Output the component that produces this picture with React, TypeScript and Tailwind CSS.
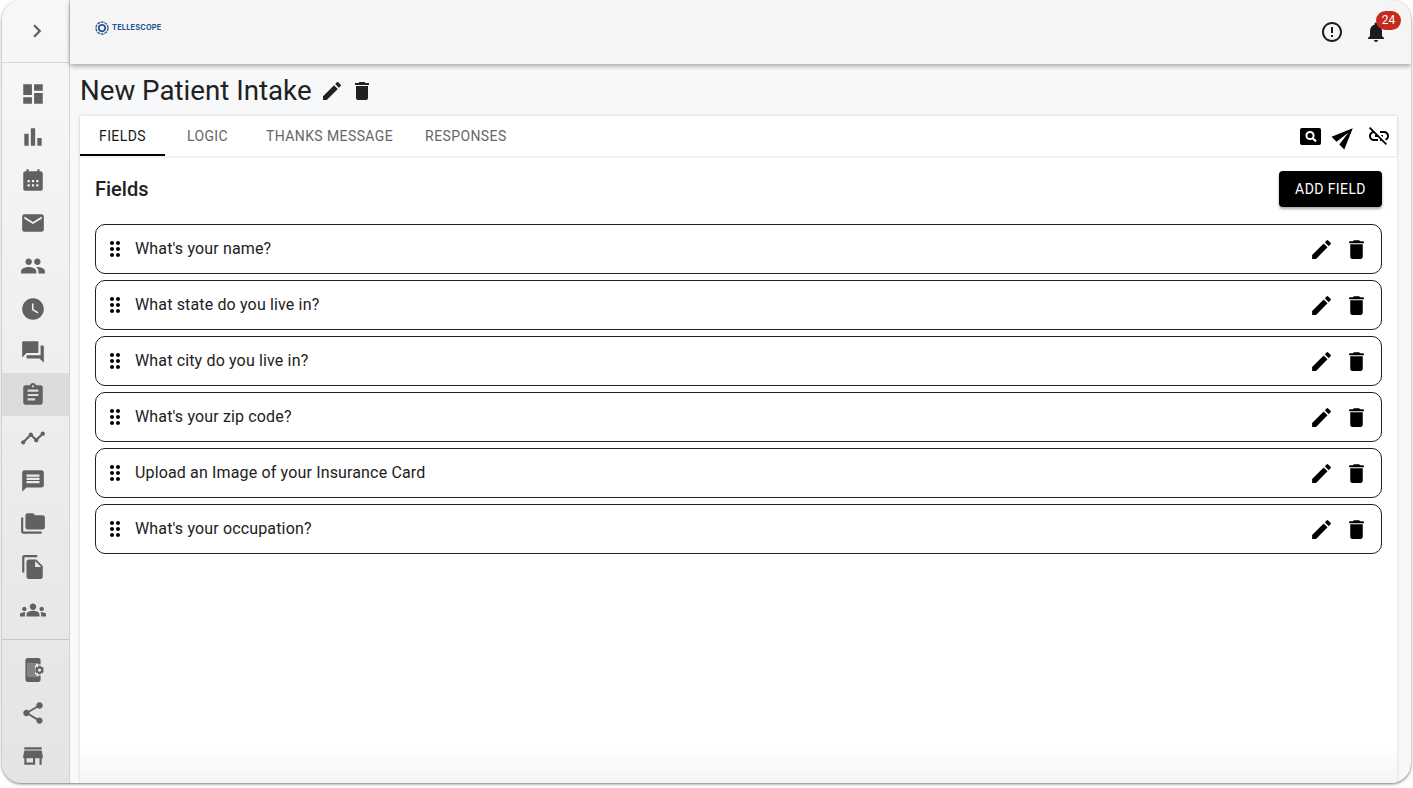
import type { ReactNode } from "react";

const P = {
  dashboard: "M3 13h8V3H3v10zm0 8h8v-6H3v6zm10 0h8V11h-8v10zm0-18v6h8V3h-8z",
  bars: "M4 9h4v11H4zm12 4h4v7h-4zm-6-9h4v16h-4z",
  calendar:
    "M19 4h-1V2h-2v2H8V2H6v2H5c-1.11 0-1.99.9-1.99 2L3 20c0 1.1.89 2 2 2h14c1.1 0 2-.9 2-2V6c0-1.1-.9-2-2-2zM9 14H7v-2h2v2zm4 0h-2v-2h2v2zm4 0h-2v-2h2v2zm-8 4H7v-2h2v2zm4 0h-2v-2h2v2zm4 0h-2v-2h2v2z",
  email: "M20 4H4c-1.1 0-1.99.9-1.99 2L2 18c0 1.1.9 2 2 2h16c1.1 0 2-.9 2-2V6c0-1.1-.9-2-2-2zm0 4l-8 5-8-5V6l8 5 8-5v2z",
  people:
    "M16 11c1.66 0 2.99-1.34 2.99-3S17.66 5 16 5c-1.66 0-3 1.34-3 3s1.34 3 3 3zm-8 0c1.66 0 2.99-1.34 2.99-3S9.66 5 8 5C6.34 5 5 6.34 5 8s1.34 3 3 3zm0 2c-2.33 0-7 1.17-7 3.5V19h14v-2.5c0-2.33-4.67-3.5-7-3.5zm8 0c-.29 0-.62.02-.97.05 1.16.84 1.97 1.97 1.97 3.45V19h6v-2.5c0-2.33-4.67-3.5-7-3.5z",
  clock: "M12 2C6.5 2 2 6.5 2 12s4.5 10 10 10 10-4.5 10-10S17.5 2 12 2zm4.2 14.2L11 13V7h1.5v5.2l4.5 2.7-.8 1.3z",
  forum:
    "M21 6h-2v9H6v2c0 .55.45 1 1 1h11l4 4V7c0-.55-.45-1-1-1zm-4 6V3c0-.55-.45-1-1-1H3c-.55 0-1 .45-1 1v14l4-4h10c.55 0 1-.45 1-1z",
  assignment:
    "M19 3h-4.18C14.4 1.84 13.3 1 12 1c-1.3 0-2.4.84-2.82 2H5c-1.1 0-2 .9-2 2v14c0 1.1.9 2 2 2h14c1.1 0 2-.9 2-2V5c0-1.1-.9-2-2-2zm-7 0c.55 0 1 .45 1 1s-.45 1-1 1-1-.45-1-1 .45-1 1-1zm2 14H7v-2h7v2zm3-4H7v-2h10v2zm0-4H7V7h10v2z",
  timeline:
    "M23 8c0 1.1-.9 2-2 2-.18 0-.35-.02-.51-.07l-3.56 3.55c.05.16.07.34.07.52 0 1.1-.9 2-2 2s-2-.9-2-2c0-.18.02-.36.07-.52l-2.55-2.55c-.16.05-.34.07-.52.07s-.36-.02-.52-.07l-4.55 4.56c.05.16.07.33.07.51 0 1.1-.9 2-2 2s-2-.9-2-2 .9-2 2-2c.18 0 .35.02.51.07l4.56-4.55C8.02 9.36 8 9.18 8 9c0-1.1.9-2 2-2s2 .9 2 2c0 .18-.02.36-.07.52l2.55 2.55c.16-.05.34-.07.52-.07s.36.02.52.07l3.55-3.56C19.02 8.35 19 8.18 19 8c0-1.1.9-2 2-2s2 .9 2 2z",
  message:
    "M20 2H4c-1.1 0-1.99.9-1.99 2L2 22l4-4h14c1.1 0 2-.9 2-2V4c0-1.1-.9-2-2-2zm-2 12H6v-2h12v2zm0-3H6V9h12v2zm0-3H6V6h12v2z",
  folders:
    "M3 6H1v13c0 1.1.9 2 2 2h17v-2H3V6zM21 4h-7l-2-2H7c-1.1 0-1.99.9-1.99 2L5 15c0 1.1.9 2 2 2h14c1.1 0 2-.9 2-2V6c0-1.1-.9-2-2-2z",
  files:
    "M16 1H4c-1.1 0-2 .9-2 2v14h2V3h12V1zm-1 4 6 6v10c0 1.1-.9 2-2 2H7.99C6.89 23 6 22.1 6 21l.01-14c0-1.1.89-2 1.99-2h7zm-1 7h5.5L14 6.5V12z",
  groups:
    "M12 12.75c1.63 0 3.07.39 4.24.9 1.08.48 1.76 1.56 1.76 2.73V18H6v-1.61c0-1.18.68-2.26 1.76-2.73 1.17-.52 2.61-.91 4.24-.91zM4 13c1.1 0 2-.9 2-2s-.9-2-2-2-2 .9-2 2 .9 2 2 2zm1.13 1.1c-.37-.06-.74-.1-1.13-.1-.99 0-1.93.21-2.78.58C.48 14.9 0 15.62 0 16.43V18h4.5v-1.61c0-.83.23-1.61.63-2.29zM20 13c1.1 0 2-.9 2-2s-.9-2-2-2-2 .9-2 2 .9 2 2 2zm4 3.43c0-.81-.48-1.53-1.22-1.85-.85-.37-1.79-.58-2.78-.58-.39 0-.76.04-1.13.1.4.68.63 1.46.63 2.29V18H24v-1.57zM12 6c1.66 0 3 1.34 3 3s-1.34 3-3 3-3-1.34-3-3 1.34-3 3-3z",
  phoneGear:
    "M21.81 12.74l-.82-.63v-.22l.8-.63c.16-.12.2-.34.1-.51l-.85-1.48c-.07-.13-.21-.2-.35-.2-.05 0-.1.01-.15.03l-.95.38c-.08-.05-.11-.07-.19-.11l-.15-1.01c-.03-.21-.2-.36-.4-.36h-1.71c-.2 0-.37.15-.4.34l-.14 1.01c-.03.02-.07.03-.1.05l-.09.06-.95-.38c-.05-.02-.1-.03-.15-.03-.14 0-.27.07-.35.2l-.85 1.48c-.1.17-.06.39.1.51l.8.63v.23l-.8.63c-.16.12-.2.34-.1.51l.85 1.48c.07.13.21.2.35.2.05 0 .1-.01.15-.03l.95-.37c.08.05.12.07.2.11l.15 1.01c.03.2.2.34.4.34h1.71c.2 0 .37-.15.4-.34l.15-1.01c.03-.02.07-.03.1-.05l.09-.06.95.38c.05.02.1.03.15.03.14 0 .27-.07.35-.2l.85-1.48c.1-.17.06-.39-.1-.51zM18 13.5c-.83 0-1.5-.67-1.5-1.5s.67-1.5 1.5-1.5 1.5.67 1.5 1.5-.67 1.5-1.5 1.5zM17 18H7V6h10v1h2V3c0-1.1-.9-2-2-2H7c-1.1 0-2 .9-2 2v18c0 1.1.9 2 2 2h10c1.1 0 2-.9 2-2v-4h-2v1z",
  phoneScreen: "M7 6h8.2l-1.6 3 .8 3-.8 3 2.4 3H7z",
  share:
    "M18 16.08c-.76 0-1.44.3-1.96.77L8.91 12.7c.05-.23.09-.46.09-.7s-.04-.47-.09-.7l7.05-4.11c.54.5 1.25.81 2.04.81 1.66 0 3-1.34 3-3s-1.34-3-3-3-3 1.34-3 3c0 .24.04.47.09.7L8.04 9.81C7.5 9.31 6.79 9 6 9c-1.66 0-3 1.34-3 3s1.34 3 3 3c.79 0 1.5-.31 2.04-.81l7.12 4.16c-.05.21-.08.43-.08.65 0 1.61 1.31 2.92 2.92 2.92 1.61 0 2.92-1.31 2.92-2.92s-1.31-2.92-2.92-2.92z",
  store: "M20 4H4v2h16V4zm1 10v-2l-1-5H4l-1 5v2h1v6h10v-6h4v6h2v-6h1zm-9 4H6v-4h6v4z",
  edit: "M3 17.25V21h3.75L17.81 9.94l-3.75-3.75L3 17.25zM20.71 7.04c.39-.39.39-1.02 0-1.41l-2.34-2.34a.9959.9959 0 0 0-1.41 0l-1.83 1.83 3.75 3.75 1.83-1.83z",
  trash: "M6 19c0 1.1.9 2 2 2h8c1.1 0 2-.9 2-2V7H6v12zM19 4h-3.5l-1-1h-5l-1 1H5v2h14V4z",
  drag: "M11 18c0 1.1-.9 2-2 2s-2-.9-2-2 .9-2 2-2 2 .9 2 2zm-2-8c-1.1 0-2 .9-2 2s.9 2 2 2 2-.9 2-2-.9-2-2-2zm0-6c-1.1 0-2 .9-2 2s.9 2 2 2 2-.9 2-2-.9-2-2-2zm6 4c1.1 0 2-.9 2-2s-.9-2-2-2-2 .9-2 2 .9 2 2 2zm0 2c-1.1 0-2 .9-2 2s.9 2 2 2 2-.9 2-2-.9-2-2-2zm0 6c-1.1 0-2 .9-2 2s.9 2 2 2 2-.9 2-2-.9-2-2-2z",
  alert:
    "M11 15h2v2h-2zm0-8h2v6h-2zm.99-5C6.47 2 2 6.48 2 12s4.47 10 9.99 10C17.52 22 22 17.52 22 12S17.52 2 11.99 2zM12 20c-4.42 0-8-3.58-8-8s3.58-8 8-8 8 3.58 8 8-3.58 8-8 8z",
  bell: "M12 22c1.1 0 2-.9 2-2h-4c0 1.1.89 2 2 2zm6-6v-5c0-3.07-1.64-5.64-4.5-6.32V4c0-.83-.67-1.5-1.5-1.5s-1.5.67-1.5 1.5v.68C7.63 5.36 6 7.92 6 11v5l-2 2v1h16v-1l-2-2z",
  send: "M2.01 21L23 12 2.01 3 2 10l15 2-15 2z",
  linkOff:
    "M17 7h-4v1.9h4c1.71 0 3.1 1.39 3.1 3.1 0 1.43-.98 2.63-2.31 2.98l1.46 1.46C20.88 15.61 22 13.95 22 12c0-2.76-2.24-5-5-5zm-1 4h-2.19l2 2H16zM2 4.27l3.11 3.11C3.29 8.12 2 9.91 2 12c0 2.76 2.24 5 5 5h4v-1.9H7c-1.71 0-3.1-1.39-3.1-3.1 0-1.59 1.21-2.9 2.76-3.07L8.73 11H8v2h2.73L13 15.27V17h1.73l4.01 4L20 19.74 3.27 3 2 4.27z",
  chevron: "M10 6L8.59 7.41 13.17 12l-4.58 4.59L10 18l6-6z",
};

function Icon({ d, className = "w-6 h-6", children }: { d: string; className?: string; children?: ReactNode }) {
  return (
    <svg viewBox="0 0 24 24" fill="currentColor" className={className}>
      {children}
      <path d={d} />
    </svg>
  );
}

function NavItem({ d, active, children }: { d: string; active?: boolean; children?: ReactNode }) {
  return (
    <div className={`flex h-[43px] items-center justify-center pr-[6px] text-[#616161] ${active ? "bg-[#dcdcdc]" : ""}`}>
      <Icon d={d} className="w-[26px] h-[26px]">
        {children}
      </Icon>
    </div>
  );
}

function Logo() {
  return (
    <div className="flex items-center gap-[3px] text-[#22568f]">
      <svg viewBox="0 0 28 28" className="w-[14px] h-[14px]" fill="none" stroke="currentColor">
        <circle cx="14" cy="14" r="12" strokeWidth="2.5" strokeDasharray="6 1.5" />
        <circle cx="14" cy="14" r="6.5" strokeWidth="3.5" />
      </svg>
      <span className="text-[7.4px] font-bold tracking-[0.2px] font-['Inter',sans-serif]">TELLESCOPE</span>
    </div>
  );
}

function Tab({ children, active }: { children: ReactNode; active?: boolean }) {
  return (
    <div
      className={`flex h-10 min-w-[85px] items-center justify-center px-4 text-sm uppercase tracking-[0.4px] ${
        active ? "border-b-2 border-black pt-[2px] text-[#1a1a1a]" : "text-[#666666]"
      }`}
    >
      {children}
    </div>
  );
}

function FieldRow({ label }: { label: string }) {
  return (
    <div className="flex h-[50px] items-center rounded-[10px] border border-[#1f1f1f] bg-white pl-[7px] pr-[12px]">
      <Icon d={P.drag} className="w-6 h-6 text-black" />
      <span className="ml-2 flex-1 text-base tracking-[0.15px] text-[#212121]">{label}</span>
      <div className="flex items-center gap-[10px] text-black">
        <Icon d={P.edit} className="w-[25px] h-[25px]" />
        <Icon d={P.trash} className="w-[25px] h-[25px]" />
      </div>
    </div>
  );
}

const fields = [
  "What's your name?",
  "What state do you live in?",
  "What city do you live in?",
  "What's your zip code?",
  "Upload an Image of your Insurance Card",
  "What's your occupation?",
];

export default function App() {
  return (
    <div className="h-screen w-full overflow-hidden bg-white px-[2px] font-['Roboto',sans-serif]">
      <div className="flex h-[783px] overflow-hidden rounded-[20px] bg-[#f7f8fa] shadow-[0_1px_3px_rgba(0,0,0,0.55)]">
        <aside className="flex w-[68px] shrink-0 flex-col border-r border-[#d4d4d4] bg-gradient-to-b from-[#f8f8f8] to-[#e4e4e4]">
          <div className="flex h-[63px] shrink-0 items-center justify-center border-b border-[#d6d6d6] pl-[2px] text-[#5f5f5f]">
            <Icon d={P.chevron} className="w-[26px] h-[26px]" />
          </div>
          <div className="flex flex-col pt-[9px]">
            <NavItem d={P.dashboard} />
            <NavItem d={P.bars} />
            <NavItem d={P.calendar} />
            <NavItem d={P.email} />
            <NavItem d={P.people} />
            <NavItem d={P.clock} />
            <NavItem d={P.forum} />
            <NavItem d={P.assignment} active />
            <NavItem d={P.timeline} />
            <NavItem d={P.message} />
            <NavItem d={P.folders} />
            <NavItem d={P.files} />
            <NavItem d={P.groups} />
          </div>
          <div className="mt-2 flex flex-col border-t border-[#c9c9c9] pt-2">
            <NavItem d={P.phoneGear}>
              <path d={P.phoneScreen} opacity="0.75" />
            </NavItem>
            <NavItem d={P.share} />
            <NavItem d={P.store} />
          </div>
        </aside>

        <div className="flex min-w-0 flex-1 flex-col">
          <header className="relative z-10 flex h-[64px] shrink-0 items-center justify-between bg-[#f5f5f5] pl-[25px] pr-[23px] shadow-[0_2px_5px_rgba(0,0,0,0.35)]">
            <div className="-mt-[8px]">
              <Logo />
            </div>
            <div className="-mt-[1px] flex items-center gap-5 text-[#1c1c1c]">
              <Icon d={P.alert} />
              <div className="relative">
                <Icon d={P.bell} />
                <span className="absolute -top-[9px] left-[12px] flex h-[19px] w-[25px] items-center justify-center rounded-full bg-[#c62a1c] text-xs text-white">
                  24
                </span>
              </div>
            </div>
          </header>

          <main className="flex min-h-0 flex-1 flex-col pl-[10px] pr-[14px]">
            <div className="flex h-[52px] shrink-0 items-center pt-[1px] text-[#212121]">
              <h1 className="text-[27.7px] font-normal leading-none">New Patient Intake</h1>
              <Icon d={P.edit} className="ml-[8px] w-6 h-6" />
              <Icon d={P.trash} className="ml-[6px] w-6 h-6" />
            </div>
            <section className="flex min-h-0 flex-1 flex-col bg-gradient-to-b from-white from-95% to-[#f4f4f4] shadow-[0_0_3px_rgba(0,0,0,0.15)]">
              <div className="flex h-10 shrink-0 items-center justify-between pr-[6px] shadow-[0_1px_2px_rgba(0,0,0,0.1)]">
                <div className="flex">
                  <Tab active>Fields</Tab>
                  <Tab>Logic</Tab>
                  <Tab>Thanks Message</Tab>
                  <Tab>Responses</Tab>
                </div>
                <div className="flex items-center text-black">
                  <svg viewBox="0 0 21 17" className="w-[21px] h-[17px]">
                    <rect width="21" height="17" rx="2" fill="currentColor" />
                    <circle cx="10" cy="7.5" r="3.6" fill="none" stroke="#fff" strokeWidth="2" />
                    <path d="M12.6 10.2 16 13.4" stroke="#fff" strokeWidth="2.2" />
                  </svg>
                  <Icon d={P.send} className="ml-[12px] w-6 h-6 -rotate-45" />
                  <Icon d={P.linkOff} className="ml-[10px] w-6 h-6" />
                </div>
              </div>
              <div className="flex items-center justify-between px-[15px] pt-[15px]">
                <h2 className="text-xl font-medium text-[#212121]">Fields</h2>
                <button className="h-9 w-[103px] rounded bg-black text-sm tracking-[0.4px] text-white shadow-[0_2px_3px_rgba(0,0,0,0.35)]">
                  ADD FIELD
                </button>
              </div>
              <div className="flex flex-col gap-[6px] px-[15px] pt-[17px]">
                {fields.map((f) => (
                  <FieldRow key={f} label={f} />
                ))}
              </div>
            </section>
          </main>
        </div>
      </div>
    </div>
  );
}
